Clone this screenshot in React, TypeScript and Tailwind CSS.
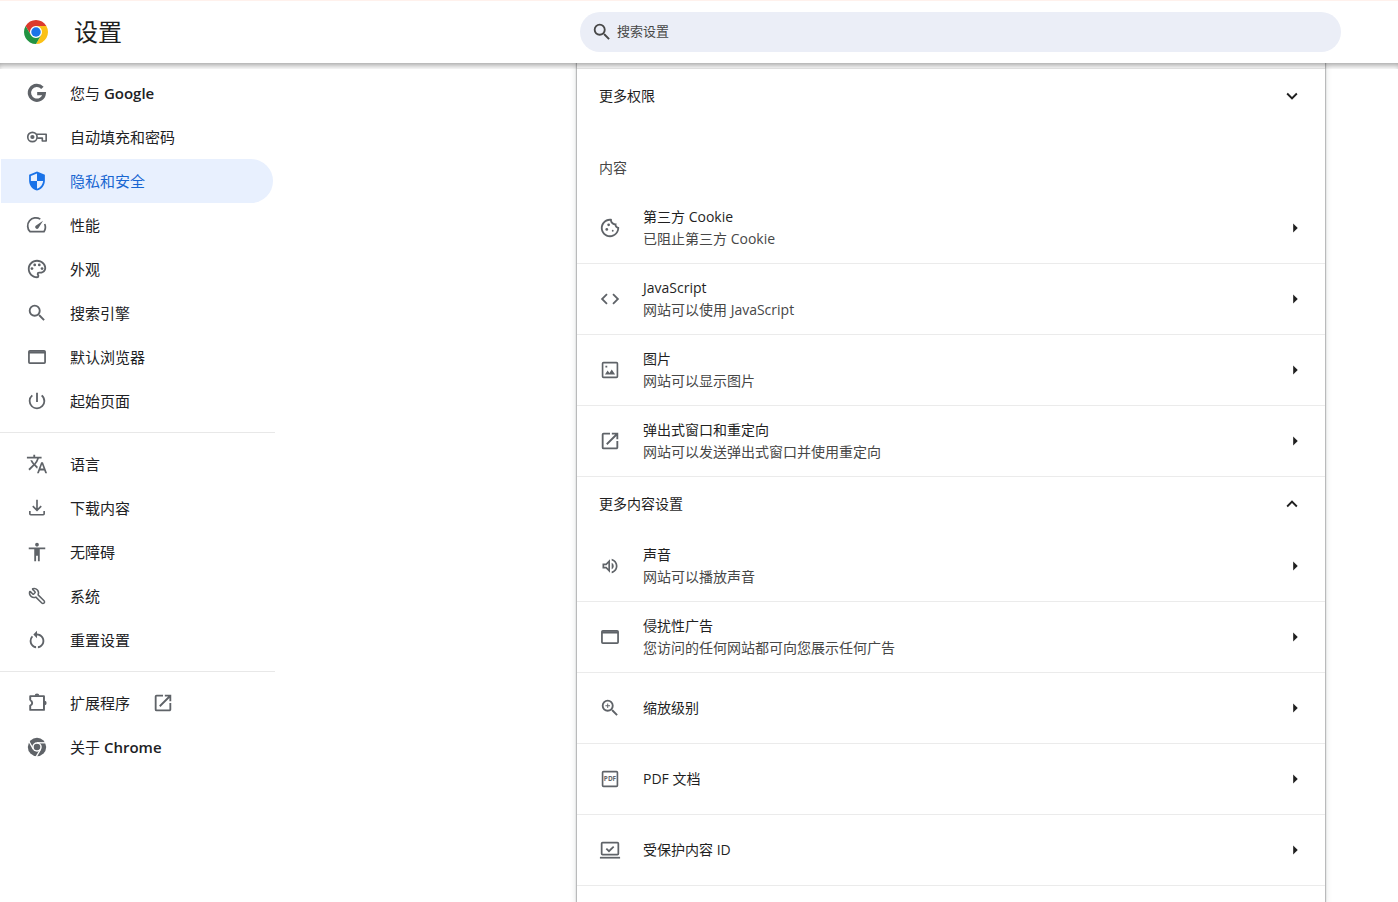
import React from "react";
import {
  MdAccessibility,
  MdArrowRight,
  MdCode,
  MdExpandLess,
  MdExpandMore,
  MdOpenInNew,
  MdOutlineCookie,
  MdOutlinePalette,
  MdOutlineVolumeUp,
  MdPowerSettingsNew,
  MdRestartAlt,
  MdSearch,
  MdTranslate,
  MdZoomIn,
} from "react-icons/md";
import { Wrench } from "lucide-react";

const svgProps = { viewBox: "0 0 24 24", width: 22, height: 22, "aria-hidden": true };

const ChromeLogo = () => (
  <svg viewBox="0 0 48 48" className="size-6 shrink-0" aria-hidden="true">
    <circle cx="24" cy="24" r="12" fill="#fff" />
    <path
      fill="#dc3a2d"
      d="M24 12h20.78a24 24 0 0 0-41.56 0L13.6 30A12 12 0 0 1 24 12Z"
    />
    <path
      fill="#fbc116"
      d="M34.39 30 24 48a24 24 0 0 0 20.78-36H24a12 12 0 0 1 10.39 18Z"
    />
    <path
      fill="#229342"
      d="M13.6 30 3.22 12A24 24 0 0 0 24 48l10.39-18a12 12 0 0 1-20.79 0Z"
    />
    <circle cx="24" cy="24" r="9.5" fill="#1a73e8" />
  </svg>
);

const GoogleIcon = () => (
  <svg {...svgProps} fill="none" stroke="currentColor" strokeWidth="3.6">
    <path d="M17.9 6.4A8.1 8.1 0 1 0 19.9 12.6H12.2" />
  </svg>
);

const KeyIcon = () => (
  <svg {...svgProps} fill="none" stroke="currentColor" strokeWidth="1.8">
    <path d="M11.6 9H22v7.4h-4.2v-3.2h-5.6" strokeLinejoin="round" />
    <circle cx="7" cy="12" r="5.1" />
    <circle cx="7" cy="12" r="2.3" fill="currentColor" stroke="none" />
  </svg>
);

const ShieldIcon = () => (
  <svg {...svgProps} fill="currentColor">
    <path d="M12 1.6 3.4 5.2v6.2c0 5.2 3.6 9.8 8.6 11 5-1.2 8.6-5.8 8.6-11V5.2L12 1.6Zm0 2.1v8.2h6.7c-.4 3.9-3.2 7.5-6.7 8.5v-8.5H5.3V6.5L12 3.7Z" />
  </svg>
);

const SpeedIcon = () => (
  <svg {...svgProps} fill="none" stroke="currentColor" strokeWidth="1.9">
    <path d="M15.6 5.6A8.9 8.9 0 0 0 4.4 19.3h15.2a8.9 8.9 0 0 0 .8-8.4" />
    <path
      fill="currentColor"
      stroke="none"
      d="M10.6 15.6a2 2 0 0 1 0-2.9L18.6 7.4l-5.1 8.2a2 2 0 0 1-2.9 0Z"
    />
  </svg>
);

const WindowIcon = () => (
  <svg {...svgProps} fill="none" stroke="currentColor" strokeWidth="1.9">
    <rect x="3.2" y="5.4" width="17.6" height="13.4" rx="1" />
    <path d="M3.2 7h17.6" strokeWidth="2.4" />
  </svg>
);

const DownloadIcon = () => (
  <svg {...svgProps} fill="none" stroke="currentColor" strokeWidth="1.8">
    <path d="M12 3v11.4M7.4 10l4.6 4.6 4.6-4.6M4.2 15.4v3q0 1 1 1h13.6q1 0 1-1v-3" />
  </svg>
);

const PuzzleIcon = () => (
  <svg {...svgProps} fill="none" stroke="currentColor" strokeWidth="2.1">
    <path
      strokeLinejoin="round"
      d="M4.6 9.2V4.5h15v15h-15v-4.7a2.9 2.9 0 0 0 0-5.6"
    />
    <path
      fill="currentColor"
      stroke="none"
      d="M9.5 4a2.5 2.5 0 0 1 5 0zM20 9.5a2.5 2.5 0 0 1 0 5z"
    />
  </svg>
);

const ChromeMonoIcon = () => (
  <svg {...svgProps}>
    <circle cx="12" cy="12" r="10" fill="currentColor" />
    <circle cx="12" cy="12" r="5.2" fill="#fff" />
    <circle cx="12" cy="12" r="3.6" fill="currentColor" />
    <g stroke="#fff" strokeWidth="1.4">
      <path d="M12 7.4h10.5" />
      <path d="M12 7.4h10.5" transform="rotate(120 12 12)" />
      <path d="M12 7.4h10.5" transform="rotate(240 12 12)" />
    </g>
  </svg>
);

const PictureIcon = () => (
  <svg {...svgProps} fill="none" stroke="currentColor" strokeWidth="1.8">
    <rect x="3.9" y="3.9" width="16.2" height="16.2" rx="1" />
    <path
      fill="currentColor"
      stroke="none"
      d="m6.5 17 2.9-4.4 2 2.8 2.5-4 3.7 5.6zM7 7.4h2v2H7z"
    />
  </svg>
);

const PdfIcon = () => (
  <svg {...svgProps}>
    <rect
      x="3.9"
      y="3.9"
      width="16.2"
      height="16.2"
      rx="1"
      fill="none"
      stroke="currentColor"
      strokeWidth="1.8"
    />
    <text
      x="12"
      y="14.6"
      textAnchor="middle"
      fontSize="7"
      fontWeight="700"
      fill="currentColor"
    >
      PDF
    </text>
  </svg>
);

const ProtectedIcon = () => (
  <svg {...svgProps} fill="none" stroke="currentColor" strokeWidth="1.9">
    <rect x="2.9" y="4" width="18.2" height="13" rx="1" />
    <path d="M1 20.4h22" />
    <path d="m8 10.4 2.9 2.9 5.1-5.1" />
  </svg>
);

type NavItem = {
  label: string;
  latin?: string;
  icon: React.ReactNode;
  active?: boolean;
  external?: boolean;
};

const navGroups: NavItem[][] = [
  [
    { label: "您与", latin: "Google", icon: <GoogleIcon /> },
    { label: "自动填充和密码", icon: <KeyIcon /> },
    { label: "隐私和安全", icon: <ShieldIcon />, active: true },
    { label: "性能", icon: <SpeedIcon /> },
    { label: "外观", icon: <MdOutlinePalette size={22} /> },
    { label: "搜索引擎", icon: <MdSearch size={22} /> },
    { label: "默认浏览器", icon: <WindowIcon /> },
    { label: "起始页面", icon: <MdPowerSettingsNew size={22} /> },
  ],
  [
    { label: "语言", icon: <MdTranslate size={22} /> },
    { label: "下载内容", icon: <DownloadIcon /> },
    { label: "无障碍", icon: <MdAccessibility size={22} /> },
    { label: "系统", icon: <Wrench size={18} className="-scale-x-100" /> },
    { label: "重置设置", icon: <MdRestartAlt size={22} /> },
  ],
  [
    { label: "扩展程序", icon: <PuzzleIcon />, external: true },
    { label: "关于", latin: "Chrome", icon: <ChromeMonoIcon /> },
  ],
];

type Setting = { title: string; sub?: string; icon: React.ReactNode };

const contentSettings: Setting[] = [
  { title: "第三方 Cookie", sub: "已阻止第三方 Cookie", icon: <MdOutlineCookie size={22} /> },
  { title: "JavaScript", sub: "网站可以使用 JavaScript", icon: <MdCode size={22} /> },
  { title: "图片", sub: "网站可以显示图片", icon: <PictureIcon /> },
  {
    title: "弹出式窗口和重定向",
    sub: "网站可以发送弹出式窗口并使用重定向",
    icon: <MdOpenInNew size={22} />,
  },
];

const moreSettings: Setting[] = [
  { title: "声音", sub: "网站可以播放声音", icon: <MdOutlineVolumeUp size={20} /> },
  { title: "侵扰性广告", sub: "您访问的任何网站都可向您展示任何广告", icon: <WindowIcon /> },
  { title: "缩放级别", icon: <MdZoomIn size={22} /> },
  { title: "PDF 文档", icon: <PdfIcon /> },
  { title: "受保护内容 ID", icon: <ProtectedIcon /> },
];

const SideLink = ({ item }: { item: NavItem }) => (
  <a
    href="#"
    aria-current={item.active ? "page" : undefined}
    className={`ml-px mr-0.5 flex h-11 items-center gap-[22px] rounded-r-full pl-[25px] text-[15px] ${
      item.active ? "bg-[#e8f0fe] text-[#1967d2]" : "text-[#202124]"
    }`}
  >
    <span
      className={`flex size-[22px] shrink-0 items-center justify-center ${
        item.active ? "text-[#1a73e8]" : "text-[#5f6368]"
      }`}
    >
      {item.icon}
    </span>
    <span>
      {item.label}
      {item.latin && <span className="font-semibold"> {item.latin}</span>}
    </span>
    {item.external && <MdOpenInNew size={22} className="text-[#5f6368]" />}
  </a>
);

const SettingRow = ({ setting }: { setting: Setting }) => (
  <button
    type="button"
    className="flex h-[71px] w-full items-center gap-[22px] border-b border-[#ebebeb] pl-[22px] pr-[19px] text-left"
  >
    <span className="flex size-[22px] shrink-0 items-center justify-center text-[#5f6368]">
      {setting.icon}
    </span>
    <span className="flex flex-1 flex-col">
      <span>{setting.title}</span>
      {setting.sub && <span className="text-[#474747]">{setting.sub}</span>}
    </span>
    <MdArrowRight size={22} />
  </button>
);

const ExpandRow = ({ label, open }: { label: string; open?: boolean }) => (
  <button
    type="button"
    aria-expanded={!!open}
    className="flex h-[54px] w-full items-center justify-between px-[22px] text-left"
  >
    <span>{label}</span>
    {open ? <MdExpandLess size={22} /> : <MdExpandMore size={22} />}
  </button>
);

const App = () => {
  return (
    <div
      lang="zh-CN"
      className="flex h-screen flex-col overflow-hidden bg-white font-['Open_Sans','Noto_Sans_CJK_SC',sans-serif] text-[#1f1f1f]"
    >
      <header className="relative z-10 flex h-[63px] shrink-0 items-center border-t border-[#fff1ec] bg-white">
        <div className="flex w-[580px] shrink-0 items-center gap-[26px] pl-6">
          <ChromeLogo />
          <h1 className="text-2xl">设置</h1>
        </div>
        <label className="mr-[57px] flex h-10 flex-1 items-center gap-1 rounded-full bg-[#ebeef7] pl-[11px] text-[#474747]">
          <MdSearch size={22} />
          <input
            type="search"
            aria-label="搜索设置"
            placeholder="搜索设置"
            className="flex-1 bg-transparent text-[13px] outline-none placeholder:text-[#474747]"
          />
        </label>
      </header>

      <div className="relative flex min-h-0 flex-1">
        {/* shadow the toolbar drops on the scrolled content */}
        <div className="pointer-events-none absolute inset-x-0 top-0 z-10 h-1.5 shadow-[inset_0_5px_6px_-3px_rgba(0,0,0,0.4)]" />

        <aside className="w-[577px] shrink-0">
          <nav aria-label="设置" className="w-[275px] pt-2">
            {navGroups.map((group, index) => (
              <div
                key={index}
                className={index > 0 ? "mt-[9px] border-t border-[#e8e8e8] pt-[9px]" : ""}
              >
                {group.map((item) => (
                  <SideLink key={item.label} item={item} />
                ))}
              </div>
            ))}
          </nav>
        </aside>

        <main className="mr-[73px] flex-1 bg-white text-sm/[22px] shadow-[0_0_1px_1px_rgba(60,64,67,0.3),0_1px_6px_1px_rgba(60,64,67,0.15)]">
          <div className="h-1.5 border-b border-[#ebebeb]" />
          <ExpandRow label="更多权限" />
          <h2 className="px-[22px] pb-3.5 pt-[34px] text-[#474747]">内容</h2>
          {contentSettings.map((setting) => (
            <SettingRow key={setting.title} setting={setting} />
          ))}
          <ExpandRow label="更多内容设置" open />
          {moreSettings.map((setting) => (
            <SettingRow key={setting.title} setting={setting} />
          ))}
        </main>
      </div>
    </div>
  );
};

export default App;
